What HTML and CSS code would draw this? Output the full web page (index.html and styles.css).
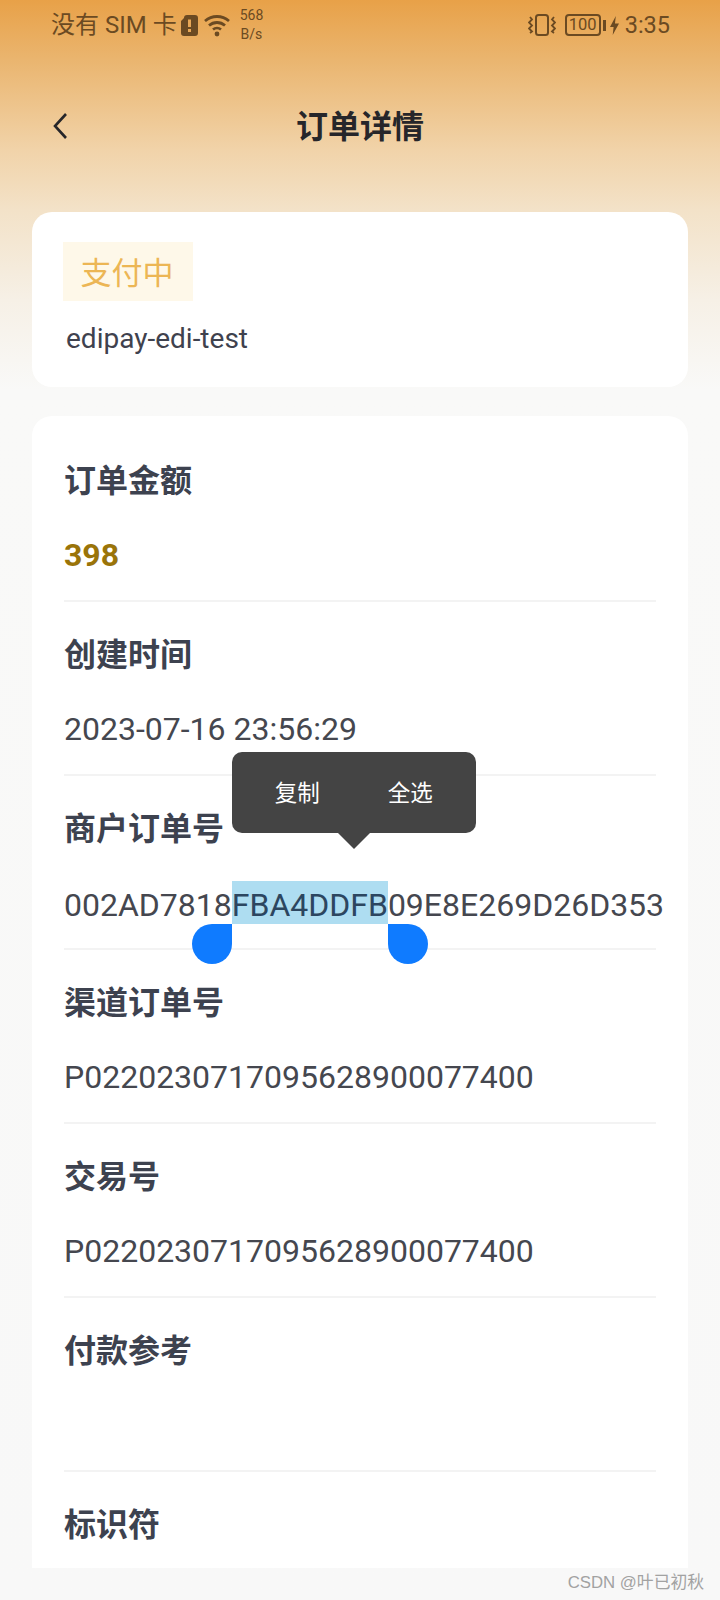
FILE: index.html
```html
<!DOCTYPE html>
<html lang="zh">
<head>
<meta charset="UTF-8" />
<meta name="viewport" content="width=device-width, initial-scale=1" />
<title>订单详情</title>
<link rel="stylesheet" href="styles.css">
</head>
<body>

<div class="statusbar">
  <div class="status-left">
    <span class="carrier">没有 SIM 卡</span>
    <svg class="sim-icon" width="17" height="21" viewBox="0 0 17 21"><path d="M3 3a3 3 0 0 1 3-3h8a3 3 0 0 1 3 3v15a3 3 0 0 1-3 3H3a3 3 0 0 1-3-3V6z" fill="#6b4a22"/><rect x="7" y="4.500" width="3" height="7.500" fill="#e8a857"/><rect x="7" y="14" width="3" height="3" fill="#e8a857"/></svg>
    <svg class="wifi-icon" width="28" height="23" viewBox="0 0 27 23" fill="none" stroke="#6b4a22" stroke-width="2.800"><path d="M1.500 7c7-6 17-6 24 0"/><path d="M5.500 11.500c4.700-4 11.300-4 16 0"/><path d="M9.500 15.500c2.300-1.800 5.700-1.800 8 0"/><circle cx="13.500" cy="20" r="2.400" fill="#6b4a22" stroke="none"/></svg>
    <div class="speed"><span>568</span><span>B/s</span></div>
  </div>
  <div class="status-right">
    <svg class="vibrate-icon" width="28" height="22" viewBox="0 0 28 22" fill="none" stroke="#6b4a22" stroke-width="1.800"><rect x="8" y="1" width="12" height="20" rx="2.500" stroke-width="2"/><path d="M2 3l2 2.500-3 3 3 3-3 3 3 3-2 1.500"/><path d="M26 3l-2 2.500 3 3-3 3 3 3-3 3 2 1.500"/></svg>
    <span class="battery">100</span>
    <span class="battery-cap"></span>
    <svg class="bolt-icon" width="9" height="19" viewBox="0 0 10 20" preserveAspectRatio="none"><path d="M6.500 0L0 11.500h4L3 20l7-12H5.500z" fill="#6b4a22"/></svg>
    <span class="clock">3:35</span>
  </div>
</div>

<div class="navbar">
  <svg class="back-icon" width="16" height="28" viewBox="0 0 16 28" fill="none" stroke="#26262a" stroke-width="2.600"><path d="M14 2L3 14l11 12"/></svg>
  <h1>订单详情</h1>
</div>

<div class="card status-card">
  <span class="tag">支付中</span>
  <p class="app-name">edipay-edi-test</p>
</div>

<div class="card detail-card">
  <div class="row">
    <div class="label">订单金额</div>
    <div class="value amount">398</div>
  </div>
  <div class="row">
    <div class="label">创建时间</div>
    <div class="value">2023-07-16 23:56:29</div>
  </div>
  <div class="row">
    <div class="label">商户订单号</div>
    <div class="value">002AD7818<span class="selected">FBA4DDFB<i class="handle handle-left"></i><i class="handle handle-right"></i><span class="menu"><span>复制</span><span>全选</span></span></span>09E8E269D26D353</div>
  </div>
  <div class="row">
    <div class="label">渠道订单号</div>
    <div class="value">P0220230717095628900077400</div>
  </div>
  <div class="row">
    <div class="label">交易号</div>
    <div class="value">P0220230717095628900077400</div>
  </div>
  <div class="row">
    <div class="label">付款参考</div>
    <div class="value"></div>
  </div>
  <div class="row last">
    <div class="label">标识符</div>
  </div>
</div>

<div class="watermark">CSDN @叶已初秋</div>

</body>
</html>
```

FILE: styles.css
```css
* {
  box-sizing: border-box;
}

body {
  margin: 0;
  width: 720px;
  height: 1600px;
  overflow: hidden;
  position: relative;
  font-family: Roboto, "Noto Sans CJK SC", sans-serif;
  background: linear-gradient(180deg, #e8a148 0, #eab56f 60px, #f1d3a9 150px, #f3e2c8 210px, #f6f0e6 300px, #f9f9f8 390px, #f8f8f8 100%);
}

/* status bar */
.statusbar {
  height: 50px;
  padding: 0 50px 0 51px;
  display: flex;
  justify-content: space-between;
  align-items: center;
  color: #6b4a22;
}

.status-left,
.status-right {
  display: flex;
  align-items: center;
}

.carrier {
  font-size: 24px;
  line-height: 30px;
}

.sim-icon {
  margin-left: 4px;
}

.wifi-icon {
  margin-left: 5px;
}

.speed {
  margin-left: 9px;
  display: flex;
  flex-direction: column;
  align-items: center;
  font-size: 14px;
  line-height: 19px;
}

.battery {
  margin-left: 9px;
  width: 36px;
  height: 22px;
  border: 2px solid #6b4a22;
  border-radius: 4px;
  font-size: 16.500px;
  line-height: 18px;
  text-align: center;
}

.battery-cap {
  margin-left: 2px;
  width: 3px;
  height: 11px;
  background: #6b4a22;
}

.bolt-icon {
  margin-left: 4px;
}

.clock {
  margin-left: 6px;
  font-size: 23.500px;
}

/* nav bar */
.navbar {
  height: 162px;
  padding: 25px 0 0 52px;
  position: relative;
  display: flex;
  align-items: flex-start;
}

.back-icon {
  margin-top: 37px;
}

.navbar h1 {
  margin: 0;
  position: absolute;
  left: 0;
  right: 0;
  top: 54px;
  text-align: center;
  font-size: 32px;
  line-height: 46px;
  font-weight: 700;
  color: #26262a;
}

/* cards */
.card {
  margin: 0 32px;
  background: #fff;
  border-radius: 20px;
}

.status-card {
  height: 175px;
  padding: 30px 31px 0;
}

.tag {
  display: inline-block;
  width: 130px;
  height: 59px;
  padding-right: 2px;
  background: #fef8e9;
  text-align: center;
  font-size: 31px;
  line-height: 63px;
  color: #ecb655;
}

.app-name {
  margin: 19px 0 0 3px;
  font-size: 28px;
  line-height: 38px;
  color: #3f424e;
}

.detail-card {
  margin-top: 29px;
  height: 1152px;
  padding: 12px 32px 0;
  border-radius: 20px 20px 0 0;
}

.row {
  height: 174px;
  border-bottom: 2px solid #f3f3f3;
}

.row.last {
  border-bottom: none;
}

.label {
  padding-top: 30px;
  font-size: 32px;
  line-height: 46px;
  font-weight: 700;
  color: #3d424f;
}

.value {
  margin-top: 29px;
  font-size: 32px;
  line-height: 44px;
  color: #45474f;
  white-space: nowrap;
}

.value.amount {
  font-weight: 700;
  color: #9a7409;
}

/* text selection */
.selected {
  position: relative;
  display: inline-block;
  padding-top: 5px;
  line-height: 38px;
  background: #aeddf1;
  color: #2c4660;
}

.handle {
  position: absolute;
  top: 100%;
  width: 40px;
  height: 40px;
  background: #0f7bff;
}

.handle-left {
  right: 100%;
  border-radius: 20px 0 20px 20px;
}

.handle-right {
  left: 100%;
  border-radius: 0 20px 20px 20px;
}

.menu {
  position: absolute;
  left: 0;
  bottom: calc(100% + 48px);
  width: 244px;
  height: 81px;
  padding: 0 43px;
  display: flex;
  justify-content: space-between;
  align-items: center;
  background: #444;
  border-radius: 10px;
  font-size: 22.500px;
  line-height: 30px;
  color: #fff;
}

.menu::after {
  content: "";
  position: absolute;
  left: 106px;
  top: 100%;
  border: 16px solid transparent;
  border-top-color: #444;
  border-bottom: none;
}

.watermark {
  position: absolute;
  right: 16px;
  bottom: 5px;
  font-family: "Liberation Sans", "Noto Sans CJK SC", sans-serif;
  font-size: 16.800px;
  line-height: 24px;
  color: #a2a2a2;
}
```
